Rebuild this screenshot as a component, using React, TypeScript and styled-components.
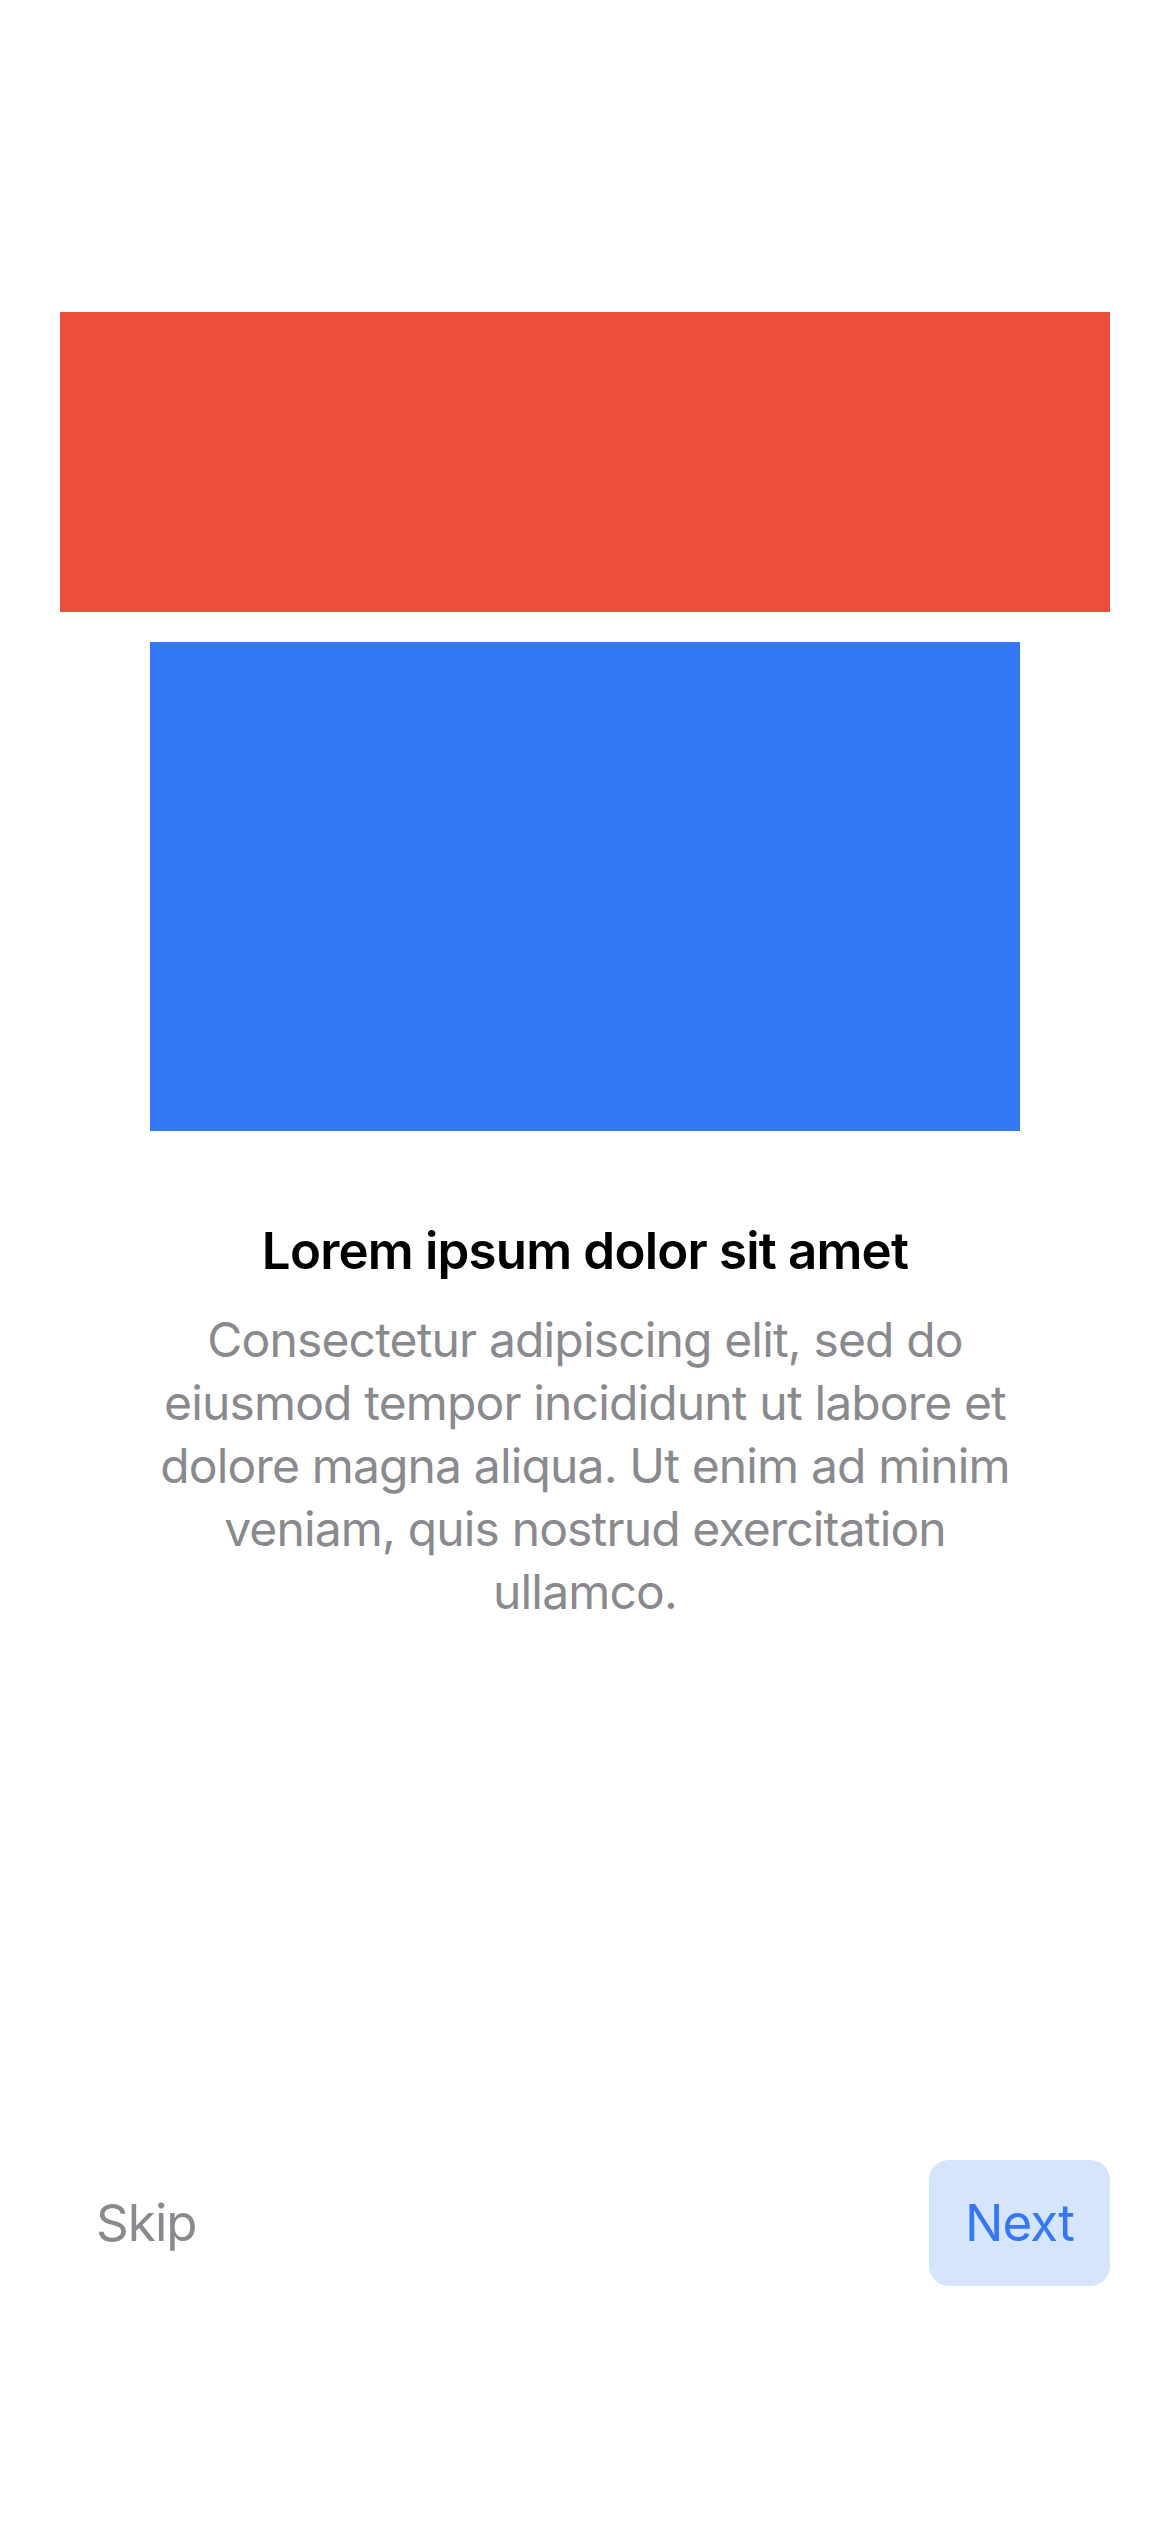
import styled, { createGlobalStyle } from "styled-components";

const GlobalStyle = createGlobalStyle`
    * {
        box-sizing: border-box;
    }

    html,
    body {
        margin: 0;
        padding: 0;
        background: #ffffff;
    }

    body {
        font-family: Inter, "Noto Sans", "Liberation Sans", sans-serif;
        -webkit-font-smoothing: antialiased;
    }
`;

const Screen = styled.main`
    display: flex;
    flex-direction: column;
    min-height: 2532px;
    padding: 312px 60px 246px;
    background: #ffffff;
`;

const Hero = styled.section`
    display: flex;
    flex-direction: column;
    align-items: center;
    gap: 30px;
`;

const Banner = styled.div`
    align-self: stretch;
    height: 300px;
    background: #eb4e3d;
`;

const Artwork = styled.div`
    width: 870px;
    height: 489px;
    background: #3478f6;
`;

const Copy = styled.section`
    display: flex;
    flex-direction: column;
    align-items: center;
    gap: 24px;
    margin: 87px auto 0;
    width: 870px;
    text-align: center;
`;

const Title = styled.h1`
    margin: 0;
    font-size: 51px;
    line-height: 66px;
    font-weight: 600;
    letter-spacing: -0.8px;
    color: #000000;
`;

const Body = styled.p`
    margin: 0;
    font-size: 48px;
    line-height: 63px;
    font-weight: 400;
    letter-spacing: -0.85px;
    color: #8a8a8e;
`;

const Footer = styled.footer`
    display: flex;
    align-items: center;
    justify-content: space-between;
    margin-top: auto;
`;

const TextButton = styled.button<{ $tone: "plain" | "tinted" }>`
    height: 126px;
    padding: 0 36px;
    border: none;
    border-radius: 20px;
    font-family: inherit;
    font-size: 51px;
    line-height: 66px;
    font-weight: 400;
    letter-spacing: -0.9px;
    cursor: pointer;
    background: ${(p) => (p.$tone === "tinted" ? "#d6e4fc" : "transparent")};
    color: ${(p) => (p.$tone === "tinted" ? "#3478f6" : "#8a8a8e")};
`;

export default function App() {
    return (
        <>
            <GlobalStyle />
            <Screen>
                <Hero>
                    <Banner />
                    <Artwork />
                </Hero>
                <Copy>
                    <Title>Lorem ipsum dolor sit amet</Title>
                    <Body>
                        Consectetur adipiscing elit, sed do eiusmod tempor incididunt ut labore et
                        dolore magna aliqua. Ut enim ad minim veniam, quis nostrud exercitation
                        ullamco.
                    </Body>
                </Copy>
                <Footer>
                    <TextButton $tone="plain">Skip</TextButton>
                    <TextButton $tone="tinted">Next</TextButton>
                </Footer>
            </Screen>
        </>
    );
}
